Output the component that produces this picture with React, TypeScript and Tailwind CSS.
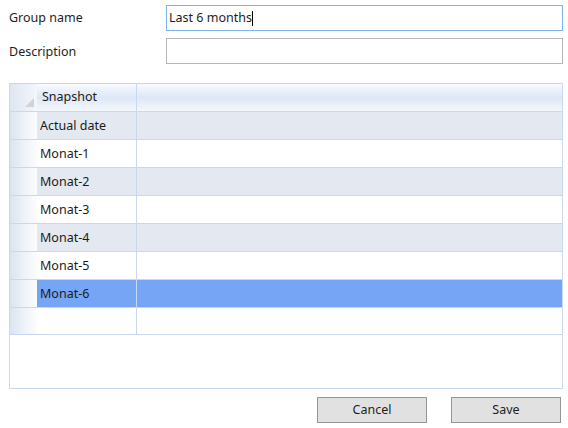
import React from "react";

const rows = ["Actual date", "Monat-1", "Monat-2", "Monat-3", "Monat-4", "Monat-5", "Monat-6"];

const RowHeader = () => (
  <div className="w-[27px] h-full shrink-0 bg-gradient-to-r from-[#dbe3ef] via-[#eef2f8] to-[#fbfcfe]" />
);

const GridRow = ({ label, index }: { label: string; index: number }) => {
  const selected = label === "Monat-6";
  const alt = index % 2 === 0;
  const bg = selected ? "bg-[#75a5f4]" : alt ? "bg-[#e4e8f0]" : "bg-white";
  return (
    <div className="flex h-[28px] border-b border-[#c8d8f3]">
      <RowHeader />
      <div className={`flex flex-1 ${bg}`}>
        <div className="w-[100px] border-r border-[#c8d8f3] flex items-center pl-[3px] pt-px text-[#1b1b1b]">
          {label}
        </div>
        <div className="flex-1" />
      </div>
    </div>
  );
};

export default function App() {
  return (
    <div
      className="w-[568px] h-[428px] bg-white pl-[9px] pr-[5px] pt-[5px] text-[12.5px] text-[#1e1e1e]"
      style={{ fontFamily: '"Segoe UI", "Noto Sans", sans-serif' }}
    >
      <div className="flex items-center h-[26px]">
        <div className="w-[157px] pt-px">Group name</div>
        <div className="flex-1 h-full border border-[#7eb4ea] flex items-center px-[2px]">
          <span>Last 6 months</span>
          <span className="w-px h-[15px] bg-black" />
        </div>
      </div>
      <div className="flex items-center h-[26px] mt-[7px]">
        <div className="w-[157px] pt-[2px]">Description</div>
        <div className="flex-1 h-full border border-[#b4b6bb]" />
      </div>

      <div className="mt-[19px] h-[306px] border border-[#c8d8f3] flex flex-col">
        <div className="flex h-[28px] border-b border-[#c8d8f3] bg-gradient-to-b from-[#f8fafe] via-[#dde7f6] to-[#f4f7fc]">
          <div className="w-[27px] h-full shrink-0 relative bg-gradient-to-r from-[#dfe6f1] to-[#f3f6fb]">
            <div className="absolute right-[3px] bottom-[4px] w-0 h-0 border-l-[9px] border-l-transparent border-b-[9px] border-b-[#d0d3d8]" />
          </div>
          <div className="w-[100px] border-r border-[#c8d8f3] flex items-center pl-[5px] text-[#1b1b1b]">
            Snapshot
          </div>
          <div className="flex-1" />
        </div>
        {rows.map((r, i) => (
          <GridRow key={r} label={r} index={i} />
        ))}
        <div className="flex h-[27px] border-b border-[#c8d8f3]">
          <RowHeader />
          <div className="w-[100px] border-r border-[#c8d8f3]" />
          <div className="flex-1" />
        </div>
        <div className="flex-1" />
      </div>

      <div className="flex justify-end mt-[8px] pr-[2px] gap-[24px]">
        <button className="w-[110px] h-[26px] border border-[#969696] bg-[#e1e1e1] text-[#1e1e1e]">
          Cancel
        </button>
        <button className="w-[110px] h-[26px] border border-[#969696] bg-[#e1e1e1] text-[#1e1e1e]">
          Save
        </button>
      </div>
    </div>
  );
}
